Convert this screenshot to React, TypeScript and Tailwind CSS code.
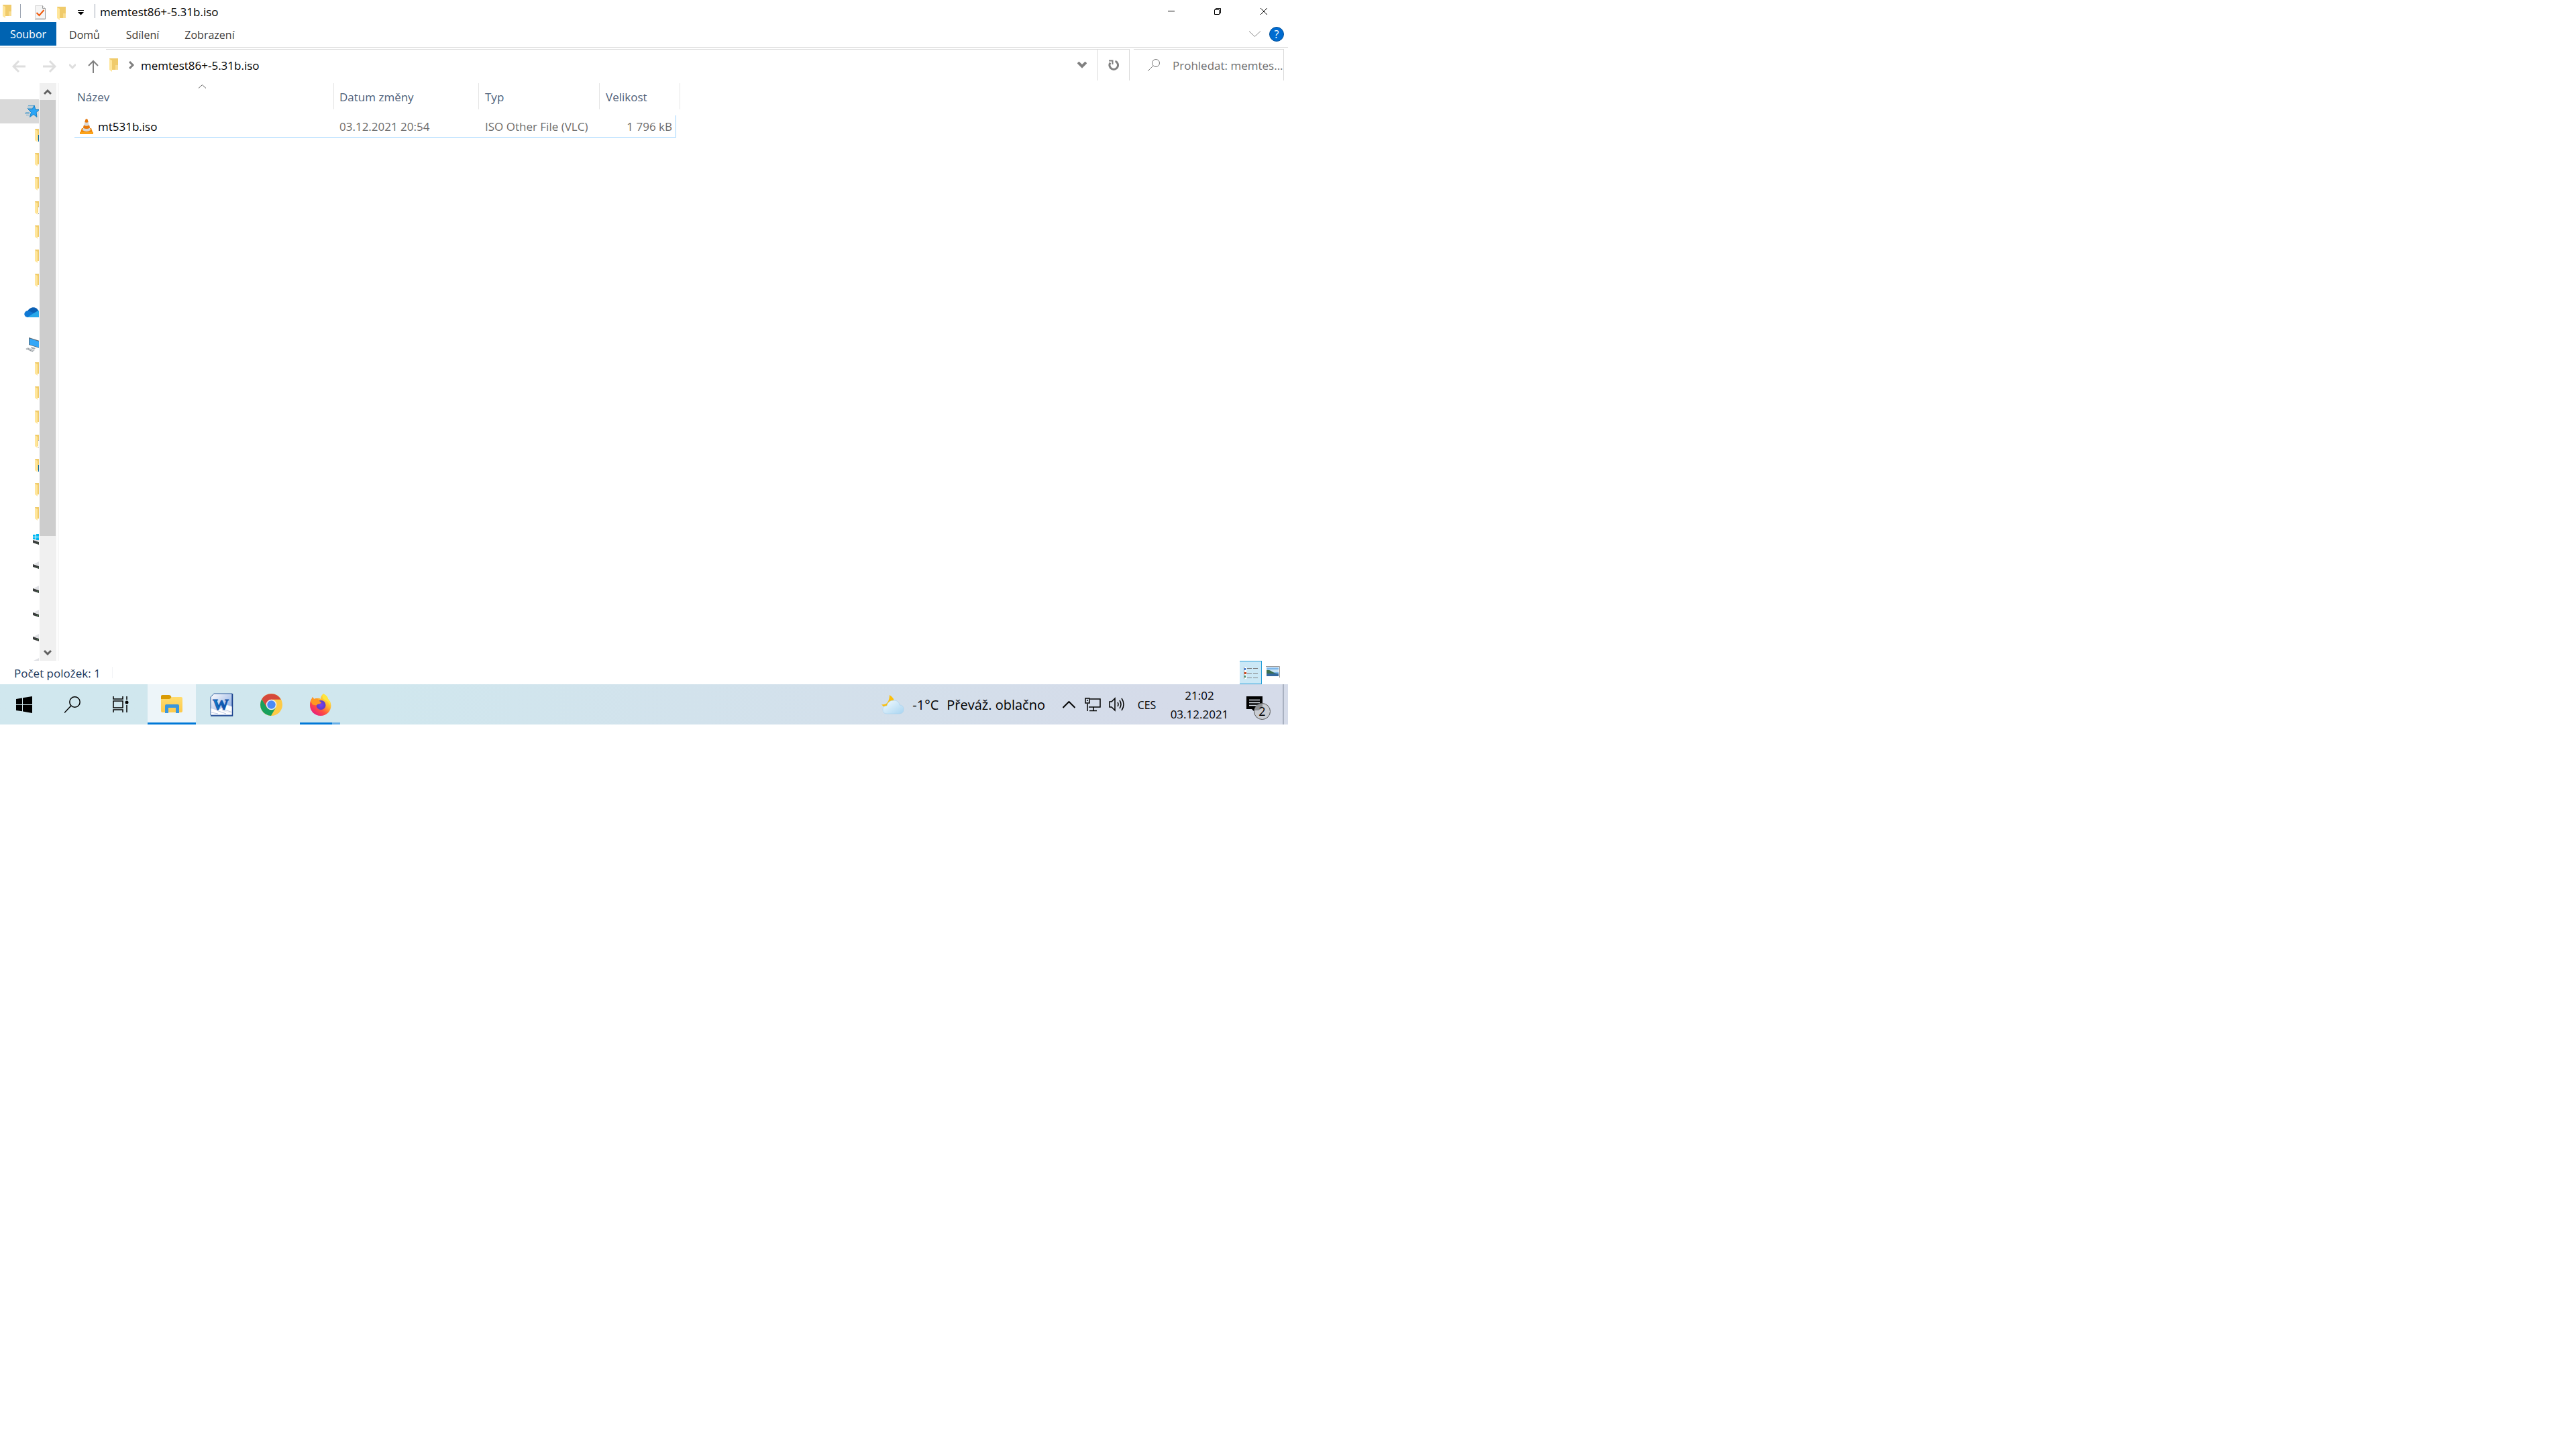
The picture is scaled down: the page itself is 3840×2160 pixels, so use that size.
import type { ReactNode } from "react";

interface FileRow {
  name: string;
  modified: string;
  type: string;
  size: string;
}

type TreeIcon = "folder" | "desktop" | "music" | "system" | "drive";

const files: FileRow[] = [
  {
    name: "mt531b.iso",
    modified: "03.12.2021 20:54",
    type: "ISO Other File (VLC)",
    size: "1 796 kB",
  },
];

const quickAccess: TreeIcon[] = [
  "desktop",
  "folder",
  "folder",
  "music",
  "folder",
  "folder",
  "folder",
];

const computer: TreeIcon[] = [
  "folder",
  "folder",
  "folder",
  "music",
  "desktop",
  "folder",
  "folder",
  "system",
  "drive",
  "drive",
  "drive",
  "drive",
  "drive",
];

const FolderIcon = () => (
  <svg width="14" height="20" viewBox="0 0 14 20" className="shrink-0">
    <path d="M0 0h13v17H4z" fill="#f0cb6b" />
    <path d="M9 10h4v7H9z" fill="#f8dc90" />
    <path d="M0 1l4 2v17l-4-3z" fill="#ffe69b" />
  </svg>
);

const DriveIcon = ({ system = false }: { system?: boolean }) => (
  <svg width="24" height="16" viewBox="0 0 24 16" className="shrink-0">
    <path d="M1 9L9 5h13v7H12z" fill="#dfe0e4" />
    <path d="M0 9l9 3v4l-9-3z" fill="#3a3d3d" />
    <path d="M7 13h1v1H7z" fill="#3fd63f" />
    {system && (
      <path d="M0 1h4v3H0zM5 0h4v4H5zM0 5h4v3H0zM5 5h4v4H5z" fill="#00b7f1" />
    )}
  </svg>
);

const TreeItem = ({ icon }: { icon: TreeIcon }) => {
  if (icon === "drive" || icon === "system") {
    return (
      <li className="flex h-9 items-center pt-1 pl-[49px]">
        <DriveIcon system={icon === "system"} />
      </li>
    );
  }
  return (
    <li className="relative flex h-9 items-center pl-[52px]">
      <FolderIcon />
      {icon === "desktop" && (
        <span className="absolute top-[17px] left-[57px] h-[10px] w-1 bg-[#0067a8]" />
      )}
      {icon === "music" && (
        <span className="absolute top-4 left-[57px] h-[11px] w-1 border-y border-gray-400 bg-white" />
      )}
    </li>
  );
};

const StarIcon = () => (
  <svg width="22" height="20" viewBox="0 0 22 20" className="shrink-0">
    <path
      d="M14 1l2 6.500h6l-5 4 1 7-5-4-5.500 4 2-7-4.500-4.500h6z"
      fill="#2ba5f7"
      stroke="#1580c4"
      strokeWidth="1"
    />
    <path d="M5 1.500h8M4 3.500h8M3 5.500h8M1 11.500h6M0 13.500h7M2 15.500h5" stroke="#6ba9cf" />
  </svg>
);

const OneDriveIcon = () => (
  <svg width="32" height="16" viewBox="0 0 32 16" className="shrink-0">
    <path d="M5 6C7 1 14-2 19 2l3 4-8 4z" fill="#0a5fb4" />
    <path d="M6 15C-2 15-1 5 6 5l9 4-6 6z" fill="#0f78d4" />
    <path d="M14 9l7-4c5-2 11 1 11 5s-2 5-5 5H5z" fill="#28a8ea" />
  </svg>
);

const ComputerIcon = () => (
  <svg width="26" height="22" viewBox="0 0 26 22" className="shrink-0">
    <path d="M6 0l16 5v11L6 11z" fill="#5d6c77" />
    <path d="M7 1.500l14 4.500v9L7 10.500z" fill="#35a7f8" />
    <path d="M10 14l6 2-2 2-5-2z" fill="#a8adb1" />
    <path d="M1 17l4-2 10 4-4 3z" fill="#d4d7da" />
    <path d="M2 17l10 4M4 16l9 4" stroke="#8b9196" strokeDasharray="2 1" />
  </svg>
);

const ConeIcon = () => (
  <svg width="20" height="23" viewBox="0 0 20 23" className="shrink-0">
    <path d="M3 14h14l3 8.500H0z" fill="#f08a0c" />
    <path d="M0 20h20v3H0z" fill="#fba31b" />
    <path d="M8.500 1q1.500-1.500 3 0L16 17q-6 4-12 0z" fill="#d8d8d8" />
    <path d="M8.500 1q1.500-1.500 3 0l1.200 4q-2.700 1.400-5.400 0z" fill="#e8780a" />
    <path d="M6 9.500q4 2.500 8 0l1.200 4q-5.200 3-10.400 0z" fill="#e8780a" />
  </svg>
);

const Chevron = ({
  points,
  width = 12,
  height = 8,
  color = "#606060",
  stroke = 3,
}: {
  points: string;
  width?: number;
  height?: number;
  color?: string;
  stroke?: number;
}) => (
  <svg width={width} height={height} viewBox={`0 0 ${width} ${height}`} className="shrink-0">
    <polyline points={points} fill="none" stroke={color} strokeWidth={stroke} />
  </svg>
);

const TitleBar = () => (
  <header className="flex h-[33px] shrink-0 items-center pl-1">
    <FolderIcon />
    <span className="ml-3 h-[21px] w-px bg-gray-400" />
    <button aria-label="Vlastnosti" className="ml-[21px] pt-1">
      <svg width="17" height="21" viewBox="0 0 17 21">
        <path d="M.5.500h11l4 4v15H.5z" fill="#f5f5f5" stroke="#d4d4d4" />
        <path d="M11.500.500v4h4v16H0" fill="none" stroke="#9a9a9a" />
        <path d="M2.500 11l4 4 7-8" fill="none" stroke="#f0590c" strokeWidth="2" />
      </svg>
    </button>
    <button aria-label="Nová složka" className="ml-4 pt-[6px]">
      <FolderIcon />
    </button>
    <button aria-label="Přizpůsobit panel" className="ml-[17px] pt-1">
      <svg width="9" height="8" viewBox="0 0 9 8">
        <path d="M0 0h9v1H0zM0 3h9L4.500 7.500z" fill="#000" />
      </svg>
    </button>
    <span className="ml-4 h-[21px] w-px bg-gray-400" />
    <h1 className="ml-[7px] pt-[2px]">memtest86+-5.31b.iso</h1>
    <div className="ml-auto flex h-full pr-[2px]">
      <button aria-label="Minimalizovat" className="flex w-[69px] items-center justify-center">
        <span className="h-px w-[10px] bg-black" />
      </button>
      <button aria-label="Obnovit" className="flex w-[69px] items-center justify-center">
        <svg width="10" height="10" viewBox="0 0 10 10" fill="none" stroke="#000">
          <path d="M.5 2.500h7v7h-7zM2.500 2V.500h7v7H8" />
        </svg>
      </button>
      <button aria-label="Zavřít" className="flex w-[69px] items-center justify-center">
        <svg width="10" height="10" viewBox="0 0 10 10" stroke="#000">
          <path d="M0 0l10 10M10 0L0 10" />
        </svg>
      </button>
    </div>
  </header>
);

const Ribbon = () => (
  <nav className="flex h-[38px] shrink-0 items-start border-b border-[#dadada] text-[16px] text-[#3c3c3c]">
    <button className="h-[35px] w-[84px] bg-[#0063b1] text-white">Soubor</button>
    <button className="h-[35px] w-[84px] pt-[2px]">Domů</button>
    <button className="h-[35px] w-[89px] pt-[2px]">Sdílení</button>
    <button className="h-[35px] w-[111px] pt-[2px]">Zobrazení</button>
    <div className="ml-auto flex h-[35px] items-center gap-[13px] pr-[6px]">
      <button aria-label="Rozbalit pás karet">
        <Chevron points="0,0.5 8.5,8.5 17,0.5" width={17} height={10} color="#8a8a8a" stroke={1} />
      </button>
      <button
        aria-label="Nápověda"
        className="flex size-[22px] items-center justify-center rounded-full border border-[#00509a] bg-[#006bd0] text-[16px] leading-none text-white"
      >
        ?
      </button>
    </div>
  </nav>
);

const AddressBar = () => (
  <div className="flex h-[53px] shrink-0 pt-[2px]">
    <div className="flex w-[158px] items-center pl-[18px]">
      <button aria-label="Zpět">
        <svg width="20" height="18" viewBox="0 0 20 18" fill="none" stroke="#dedede" strokeWidth="3">
          <path d="M20 9H2M10 1L2 9l8 8" />
        </svg>
      </button>
      <button aria-label="Vpřed" className="ml-[26px]">
        <svg width="20" height="18" viewBox="0 0 20 18" fill="none" stroke="#dedede" strokeWidth="3">
          <path d="M0 9h18M10 1l8 8-8 8" />
        </svg>
      </button>
      <button aria-label="Poslední umístění" className="ml-[19px]">
        <Chevron points="0,1 5,6 10,1" width={10} color="#dedede" />
      </button>
      <button aria-label="Nahoru" className="ml-[18px]">
        <svg width="16" height="20" viewBox="0 0 16 20" fill="none" stroke="#808080" strokeWidth="2">
          <path d="M8 20V2M1 9l7-7 7 7" />
        </svg>
      </button>
    </div>
    <div className="flex h-[47px] min-w-0 flex-1 border-t border-r border-[#dadada]">
      <div className="flex flex-1 items-center pl-[5px]">
        <FolderIcon />
        <div className="ml-[15px]">
          <Chevron points="1,1 6,6 1,11" width={9} height={12} color="#808080" />
        </div>
        <span className="ml-[9px] pt-[2px]">memtest86+-5.31b.iso</span>
      </div>
      <button aria-label="Předchozí umístění" className="px-[16px]">
        <Chevron points="1,1 7,7 13,1" width={14} height={10} color="#808080" stroke={4} />
      </button>
      <button aria-label="Aktualizovat" className="flex w-[47px] items-center justify-center border-l border-[#dadada]">
        <svg width="16" height="16" viewBox="0 0 16 16" fill="none" stroke="#808080" strokeWidth="3">
          <path d="M10.500 2.200A6.300 6.300 0 1 1 3 4.500" />
          <path d="M1 1.500h5.500V7" strokeWidth="2" />
        </svg>
      </button>
    </div>
    <label className="mr-[6px] ml-[6px] flex h-[47px] w-[224px] items-center border-t border-r border-[#dadada] pl-[21px]">
      <svg width="18" height="18" viewBox="0 0 18 18" fill="none" stroke="#7a7a7a" className="shrink-0">
        <circle cx="12" cy="6" r="5.500" />
        <path d="M8 10l-8 8" />
      </svg>
      <input
        type="text"
        aria-label="Prohledat"
        placeholder="Prohledat: memtes..."
        className="ml-[19px] min-w-0 flex-1 pt-[2px] outline-none placeholder:text-[#707070]"
      />
    </label>
  </div>
);

const Sidebar = () => (
  <aside className="flex w-[88px] shrink-0 border-r-2 border-[#f7f7f7]">
    <div className="w-[58px] overflow-hidden pt-6">
      <div className="flex h-9 items-center bg-[#d9d9d9] pl-[37px]">
        <StarIcon />
      </div>
      <ul>
        {quickAccess.map((icon, index) => (
          <TreeItem key={index} icon={icon} />
        ))}
      </ul>
      <div className="mt-3 flex h-9 items-center pl-9">
        <OneDriveIcon />
      </div>
      <div className="mt-3 flex h-9 items-center pl-[37px]">
        <ComputerIcon />
      </div>
      <ul>
        {computer.map((icon, index) => (
          <TreeItem key={index} icon={icon} />
        ))}
      </ul>
    </div>
    <div className="ml-px flex w-[25px] flex-col bg-[#f0f0f0]">
      <button aria-label="Posunout nahoru" className="flex h-[25px] shrink-0 items-center justify-center pr-px">
        <Chevron points="1,8 6,3 11,8" height={10} />
      </button>
      <div className="min-h-0 flex-1">
        <div className="h-4/5 w-6 bg-[#cdcdcd]" />
      </div>
      <button aria-label="Posunout dolů" className="flex h-6 shrink-0 items-center justify-center pr-px">
        <Chevron points="1,2 6,7 11,2" height={10} />
      </button>
    </div>
  </aside>
);

const HeaderCell = ({ children, className }: { children: ReactNode; className: string }) => (
  <th
    scope="col"
    className={`relative h-[39px] border-r border-[#e5e5e5] p-0 pt-[2px] text-left font-normal ${className}`}
  >
    {children}
  </th>
);

const FileList = () => (
  <main className="min-w-0 flex-1 overflow-hidden pl-[23px]">
    <table className="table-fixed border-separate border-spacing-0">
      <thead className="text-[#4c607a]">
        <tr>
          <HeaderCell className="w-[387px] pl-1">
            Název
            <span className="absolute top-[2px] left-1/2 -ml-2 leading-none">
              <Chevron points="0,5.5 5.5,0.5 11,5.5" width={11} height={6} stroke={1} />
            </span>
          </HeaderCell>
          <HeaderCell className="w-[216px] pl-2">Datum změny</HeaderCell>
          <HeaderCell className="w-[180px] pl-[9px]">Typ</HeaderCell>
          <HeaderCell className="w-[120px] pl-[9px]">Velikost</HeaderCell>
        </tr>
      </thead>
      <tbody className="text-[#6d6d6d]">
        {files.map((file) => (
          <tr key={file.name}>
            <td className="p-0 pt-[9px]">
              <div className="flex h-[33px] items-center gap-[7px] border-b border-[#99d1ff] pl-2 text-black">
                <ConeIcon />
                <span className="pt-[2px]">{file.name}</span>
              </div>
            </td>
            <td className="p-0 pt-[9px]">
              <div className="flex h-[33px] items-center border-b border-[#99d1ff] pt-[2px] pl-2">
                {file.modified}
              </div>
            </td>
            <td className="p-0 pt-[9px]">
              <div className="flex h-[33px] items-center border-b border-[#99d1ff] pt-[2px] pl-[9px]">
                {file.type}
              </div>
            </td>
            <td className="p-0 pt-[9px] pr-[6px]">
              <div className="flex h-[33px] items-center justify-end border-r border-b border-[#99d1ff] pt-[2px] pr-[5px]">
                {file.size}
              </div>
            </td>
          </tr>
        ))}
      </tbody>
    </table>
  </main>
);

const StatusBar = () => (
  <footer className="flex h-[35px] shrink-0 items-center pl-[21px] text-[#1e395b]">
    <span className="pt-[2px]">Počet položek: {files.length}</span>
    <span className="ml-[17px] h-[17px] w-px bg-gray-100" />
    <div className="ml-auto flex h-full items-center gap-[6px] pr-3">
      <button
        aria-label="Podrobnosti"
        className="flex h-full w-[33px] items-center justify-center border-y border-r border-[#26a0da] bg-[#cbe8f6]"
      >
        <svg width="21" height="18" viewBox="0 0 21 18">
          <path d="M0 0h4v18H0z" fill="#fff" />
          <path d="M.5 0v18" stroke="#999" />
          <path d="M1 2h2v3H1z" fill="#3c78d8" />
          <path d="M1 8h3v3H1z" fill="#d2481e" />
          <path d="M1 13h2v3H1z" fill="#3a8f6a" />
          <path d="M5 2.500h7M14 2.500h7M5 9.500h7M14 9.500h7M5 16.500h7M14 16.500h7" stroke="#808080" />
        </svg>
      </button>
      <button aria-label="Velké ikony" className="pb-[2px]">
        <svg width="21" height="17" viewBox="0 0 21 17">
          <path d="M0 .500h20.500V17" fill="none" stroke="#9a9a9a" />
          <path d="M1 2h18v13H1z" fill="#7db7ea" />
          <path d="M1 5h18v4H1z" fill="#c7e2f3" />
          <path d="M1 6q4-1 8 2t10 3H1z" fill="#3d6e4e" />
          <path d="M1 11h18v4H1z" fill="#34699f" />
        </svg>
      </button>
    </div>
  </footer>
);

const WindowsLogo = () => (
  <svg width="24" height="25" viewBox="0 0 24 25">
    <path d="M0 4l9-1.500V12H0zM10 2.300L24 0v12H10zM0 13h9v9.300L0 21zM10 13h14v12l-14-2.500z" fill="#000" />
  </svg>
);

const SearchGlyph = () => (
  <svg width="24" height="25" viewBox="0 0 24 25" fill="none" stroke="#000" strokeWidth="1.500">
    <circle cx="15.500" cy="8.500" r="7.700" />
    <path d="M10 14L0 24.500" />
  </svg>
);

const TaskViewIcon = () => (
  <svg width="24" height="24" viewBox="0 0 24 24" fill="none" stroke="#000" strokeWidth="1.500">
    <path d="M1 0v4h14V0M1 24v-4h14v4M1 7h14v10H1zM21 0v5M21 13v11" />
    <circle cx="21" cy="9" r="2.500" fill="#000" stroke="none" />
  </svg>
);

const ExplorerIcon = () => (
  <svg width="32" height="28" viewBox="0 0 32 28">
    <defs>
      <linearGradient id="explorer" x2="0" y2="1">
        <stop offset="0" stopColor="#ffdc6e" />
        <stop offset="1" stopColor="#fdc94a" />
      </linearGradient>
    </defs>
    <path d="M0 2q0-2 2-2h10q2 0 3 2l1 3-3 3H0z" fill="#d99b05" />
    <path d="M0 6h12q2 0 3-2 1-1 3-1h12q2 0 2 2v19q0 2-2 2H2q-2 0-2-2z" fill="url(#explorer)" />
    <path d="M6 27V16q0-2 2-2h17q2 0 2 2v11h-5v-8H11v8z" fill="#3a96dd" />
  </svg>
);

const WordIcon = () => (
  <svg width="35" height="35" viewBox="0 0 35 35">
    <defs>
      <linearGradient id="word" x2="1" y2="1">
        <stop offset="0" stopColor="#fff" />
        <stop offset="1" stopColor="#7b9fdc" />
      </linearGradient>
      <linearGradient id="wordLetter" x2="1" y2="0">
        <stop offset="0" stopColor="#0a86cf" />
        <stop offset="1" stopColor="#123f9e" />
      </linearGradient>
    </defs>
    <path d="M6 1h27v32H1V6z" fill="url(#word)" stroke="#2c5a9c" />
    <path d="M1.500 23l10 3 12-7 10 3v10.500h-32z" fill="#fff" />
    <path d="M23 17l12 4-3 9-14-4z" fill="#fff" stroke="#c8d2e6" strokeWidth=".5" />
    <path d="M2 29l10 2M10 26l14 5M18 24l13 4" stroke="#bfcbe3" />
    <path d="M33.500 1v33H1" fill="none" stroke="#173f8c" strokeWidth="1.500" />
    <text
      x="4"
      y="25"
      fontSize="24"
      fontWeight="700"
      fill="url(#wordLetter)"
      stroke="#1257ae"
      fontFamily="Liberation Serif, serif"
    >
      W
    </text>
  </svg>
);

const ChromeIcon = () => (
  <svg width="33" height="33" viewBox="0 0 33 33">
    <circle cx="16.500" cy="16.500" r="16.500" fill="#fdca45" />
    <path d="M2.200 8.300A16.500 16.500 0 0 1 30.800 8.800H16.500l-7 12z" fill="#d5493b" />
    <path d="M2.200 8.300A16.500 16.500 0 0 0 16 33l7.200-12.500H9.700z" fill="#17a05c" />
    <circle cx="16.500" cy="16.500" r="7.800" fill="#f1f1f1" />
    <circle cx="16.500" cy="16.500" r="6.200" fill="#4a8af4" />
  </svg>
);

const FirefoxIcon = () => (
  <svg width="32" height="33" viewBox="0 0 32 33">
    <defs>
      <linearGradient id="fox" x1="0.9" x2="0.2" y1="0.1" y2="1">
        <stop offset="0" stopColor="#fff44f" />
        <stop offset="0.35" stopColor="#ffb52e" />
        <stop offset="0.65" stopColor="#ff4f3f" />
        <stop offset="1" stopColor="#e31587" />
      </linearGradient>
      <radialGradient id="globe">
        <stop offset="0" stopColor="#7b3ff2" />
        <stop offset="1" stopColor="#5a3cc4" />
      </radialGradient>
    </defs>
    <path
      d="M20 0q6 3 7 8 4 3 4.500 9.500C31.500 26 25 33 16 33S0 26 0 17q0-6 3-10l1-2 2 3q3-1 5-1 3-1 5 1 0-5 4-8z"
      fill="url(#fox)"
    />
    <circle cx="16.500" cy="17" r="7" fill="url(#globe)" />
    <path d="M4 5l2 3q3-1 5-1l3 4 3 2q-1 2-4 2.500-2 0-3 2l-6-1-3-5z" fill="#ff9822" />
    <path d="M20 0q6 3 7 8 4 4 3 9-2-5-6-7-4-1-5-4t1-6z" fill="#ffe63d" />
  </svg>
);

const WeatherIcon = () => (
  <svg width="34" height="29" viewBox="0 0 34 29">
    <defs>
      <linearGradient id="cloud" x2="1" y2="1">
        <stop offset="0" stopColor="#f3fbff" />
        <stop offset="1" stopColor="#a8d4f1" />
      </linearGradient>
    </defs>
    <path d="M12 0q7 4 7 11l-9 8-5-1q-3-1-5-4 6 1 9-3t3-11z" fill="#fcbf0a" />
    <path
      d="M8 28q-6 0-6-6t6-6q2-8 10-8t9 7q6 0 6 6.500t-7 6.500z"
      fill="url(#cloud)"
      stroke="#9fcdec"
      strokeWidth=".5"
    />
  </svg>
);

const NetworkIcon = () => (
  <svg width="24" height="21" viewBox="0 0 24 21" fill="none" stroke="#000" strokeWidth="1.500">
    <path d="M8 2h15v12H6M13 14v6M7 19.500h11M4 9v11M1 1h6v7H1zM3 4h2" />
  </svg>
);

const SoundIcon = () => (
  <svg width="24" height="22" viewBox="0 0 24 22" fill="none" stroke="#000" strokeWidth="1.500">
    <path d="M1 7h3l5-5v18l-5-5H1z" />
    <path d="M13 8q2 3 0 6M16 5q4 6 0 12M19 2q6 9 0 18" />
  </svg>
);

const TaskButton = ({ label, active = false, children }: { label: string; active?: boolean; children: ReactNode }) => (
  <button
    aria-label={label}
    className={`flex h-full w-[72px] items-center justify-center ${
      active ? "border-b-[3px] border-[#0078d7] bg-[#edf5f9] pt-[3px]" : ""
    }`}
  >
    {children}
  </button>
);

const Taskbar = () => (
  <div className="flex h-[60px] shrink-0 items-center justify-between bg-linear-to-r from-[#d0e7ee] from-30% to-[#d5dbe9] to-90%">
    <div className="flex h-full gap-[2px]">
      <div className="mr-[2px] flex h-full">
        <TaskButton label="Start">
          <WindowsLogo />
        </TaskButton>
        <TaskButton label="Hledat">
          <SearchGlyph />
        </TaskButton>
        <TaskButton label="Zobrazení úloh">
          <TaskViewIcon />
        </TaskButton>
      </div>
      <TaskButton label="Průzkumník souborů" active>
        <ExplorerIcon />
      </TaskButton>
      <TaskButton label="Word">
        <WordIcon />
      </TaskButton>
      <TaskButton label="Chrome">
        <ChromeIcon />
      </TaskButton>
      <div className="relative">
        <TaskButton label="Firefox">
          <FirefoxIcon />
        </TaskButton>
        <span className="absolute bottom-0 left-[5px] h-[3px] w-[60px] border-r-[12px] border-[#66aee7] bg-[#0078d7]" />
      </div>
    </div>
    <div className="flex h-full items-center">
      <button className="mr-[17px] flex items-center text-[20px]">
        <WeatherIcon />
        <span className="ml-3 pt-[2px]">-1°C</span>
        <span className="ml-3 pt-[2px]">Převáž. oblačno</span>
      </button>
      <button aria-label="Skryté ikony" className="flex w-9 justify-center">
        <Chevron points="0.5,10 9.5,1 18.5,10" width={19} height={11} color="#000" stroke={2} />
      </button>
      <button aria-label="Síť" className="flex w-9 justify-center">
        <NetworkIcon />
      </button>
      <button aria-label="Hlasitost" className="flex w-9 justify-center">
        <SoundIcon />
      </button>
      <button className="w-[53px] pt-[2px] text-[16px]">CES</button>
      <button className="flex w-[104px] flex-col items-center pt-[2px] leading-7">
        <span>21:02</span>
        <span>03.12.2021</span>
      </button>
      <button aria-label="Oznámení" className="flex w-[72px] justify-center pt-[10px]">
        <svg width="36" height="35" viewBox="0 0 36 35">
          <path d="M0 0h24v19H12v4l-4-4H0z" fill="#000" />
          <path d="M4 5.500h16M4 9.500h16M4 13.500h16" stroke="#dfe4ee" strokeWidth="1.500" />
          <circle cx="23.500" cy="22.500" r="12" fill="#c9ccd2" stroke="#555" />
          <path d="M12 21v-1q3-7 9-9h3v6l-6 4z" fill="#8d8f93" />
          <text x="23.500" y="29" fontSize="18" textAnchor="middle" fontFamily="Open Sans, sans-serif">
            2
          </text>
        </svg>
      </button>
      <button aria-label="Zobrazit plochu" className="h-full w-2 border-l-2 border-[#a9b1c0]" />
    </div>
  </div>
);

export default function App() {
  return (
    <div className="min-h-screen bg-white font-['Open_Sans','Noto_Sans',sans-serif] text-[17px] leading-6 text-black">
      <div className="flex h-[50vh] w-1/2 flex-col">
        <TitleBar />
        <Ribbon />
        <AddressBar />
        <div className="flex min-h-0 flex-1">
          <Sidebar />
          <FileList />
        </div>
        <StatusBar />
        <Taskbar />
      </div>
    </div>
  );
}
